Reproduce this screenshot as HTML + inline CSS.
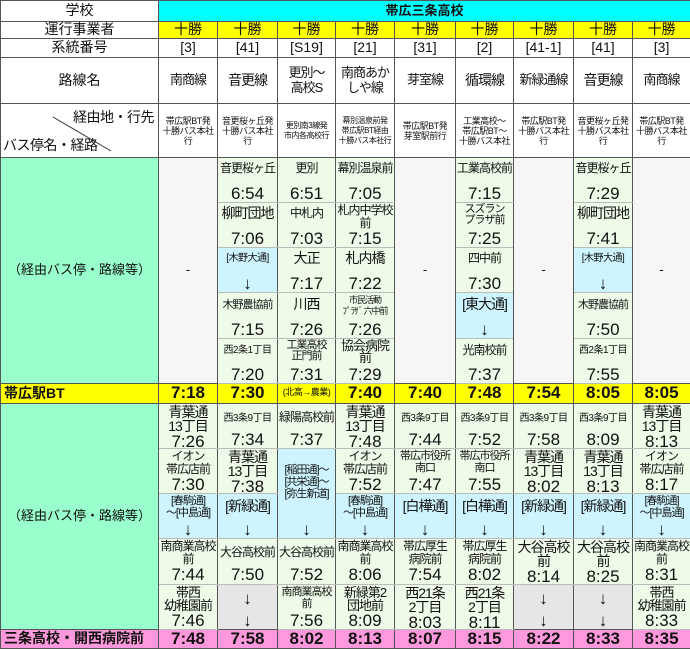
<!DOCTYPE html>
<html><head><meta charset="utf-8">
<style>
body{margin:0;background:#fff;font-family:"Liberation Sans","Noto Sans CJK JP",sans-serif;}
table{border-collapse:collapse;table-layout:fixed;width:690px;}
td{border:1px solid #555;padding:0;text-align:center;vertical-align:middle;font-size:13px;line-height:1.1;overflow:hidden;color:#111;white-space:nowrap;}
.hd{background:#00ffff;font-weight:bold;}
.y{background:#ffff00;}
.g{background:#edfbe8;border-color:#777 #555 #bbb #555;}
.b{background:#cdf4ff;border-color:#777 #555 #bbb #555;}
.gr{background:#e6e6e6;}
.w{background:#f6f6f6;}
.lg{background:#99ffcc;}
.pk{background:#ff99dd;}
.c{height:44px;display:flex;flex-direction:column;justify-content:space-between;align-items:center;padding:1px 0 0;box-sizing:border-box;overflow:hidden;}
.c span:first-child{letter-spacing:-1px;white-space:nowrap;font-size:12px;line-height:13px;}
.c span.t{font-size:17px;line-height:17px;letter-spacing:0;}
.c span.s{font-size:10px;letter-spacing:-0.5px;}
.c span.m{font-size:14px;line-height:14px;letter-spacing:-1px;}
.r{font-size:17px;font-weight:bold;}
.sm{font-size:9px;letter-spacing:-0.5px;line-height:10px;}
.rn{font-size:14px;}
</style></head><body>
<table>
<colgroup><col style="width:158px"><col style="width:59px"><col style="width:60px"><col style="width:58px"><col style="width:59px"><col style="width:61px"><col style="width:58px"><col style="width:60px"><col style="width:59px"><col style="width:58px"></colgroup>
<tr style="height:21px"><td style="font-size:14px">学校</td><td colspan="9" class="hd">帯広三条高校</td></tr>
<tr style="height:17px"><td style="font-size:14px">運行事業者</td><td class="y rn">十勝</td><td class="y rn">十勝</td><td class="y rn">十勝</td><td class="y rn">十勝</td><td class="y rn">十勝</td><td class="y rn">十勝</td><td class="y rn">十勝</td><td class="y rn">十勝</td><td class="y rn">十勝</td></tr>
<tr style="height:19px"><td style="font-size:14px">系統番号</td><td class="rn">[3]</td><td class="rn">[41]</td><td class="rn">[S19]</td><td class="rn">[21]</td><td class="rn">[31]</td><td class="rn">[2]</td><td class="rn">[41-1]</td><td class="rn">[41]</td><td class="rn">[3]</td></tr>
<tr style="height:46px"><td style="font-size:14px">路線名</td><td style="letter-spacing:-1px">南商線</td><td class="rn" style="letter-spacing:-1px">音更線</td><td style="letter-spacing:-1px">更別～<br>高校S</td><td style="letter-spacing:-1px">南商あか<br>しや線</td><td style="letter-spacing:-1px">芽室線</td><td class="rn" style="letter-spacing:-1px">循環線</td><td style="letter-spacing:-1px">新緑通線</td><td class="rn" style="letter-spacing:-1px">音更線</td><td style="letter-spacing:-1px">南商線</td></tr>
<tr style="height:54px"><td style="position:relative;height:53px;text-align:left">
<svg width="158" height="54" style="position:absolute;left:0;top:0"><line x1="52" y1="13" x2="110" y2="47" stroke="#333" stroke-width="1"/></svg>
<span style="position:absolute;right:4px;top:6px;font-size:14px;letter-spacing:-0.5px">経由地・行先</span>
<span style="position:absolute;left:2px;bottom:4px;font-size:14px;letter-spacing:-0.5px">バス停名・経路</span></td>
<td class="sm">帯広駅BT発<br>十勝バス本社<br>行</td><td class="sm">音更桜ヶ丘発<br>十勝バス本社<br>行</td><td class="sm" style="font-size:8px">更別南3線発<br>市内各高校行</td><td class="sm" style="font-size:8px">幕別温泉前発<br>帯広駅BT経由<br>十勝バス本社行</td><td class="sm">帯広駅BT発<br>芽室駅前行</td><td class="sm">工業高校～<br>帯広駅BT～<br>十勝バス本社</td><td class="sm">帯広駅BT発<br>十勝バス本社<br>行</td><td class="sm">音更桜ヶ丘発<br>十勝バス本社<br>行</td><td class="sm">帯広駅BT発<br>十勝バス本社<br>行</td></tr>

<tr style="height:45px"><td rowspan="5" class="lg" style="font-size:13px">（経由バス停・路線等）</td>
<td rowspan="5" class="w">-</td>
<td class="g"><div class="c"><span style="margin-top:3px">音更桜ヶ丘</span><span class="t">6:54</span></div></td>
<td class="g"><div class="c"><span style="margin-top:3px">更別</span><span class="t">6:51</span></div></td>
<td class="g"><div class="c"><span style="margin-top:3px">幕別温泉前</span><span class="t">7:05</span></div></td>
<td rowspan="5" class="w">-</td>
<td class="g"><div class="c"><span style="margin-top:3px">工業高校前</span><span class="t">7:15</span></div></td>
<td rowspan="5" class="w">-</td>
<td class="g"><div class="c"><span style="margin-top:3px">音更桜ヶ丘</span><span class="t">7:29</span></div></td>
<td rowspan="5" class="w">-</td></tr>
<tr style="height:45px">
<td class="g"><div class="c"><span style="font-size:14px;margin-top:3px">柳町団地</span><span class="t">7:06</span></div></td>
<td class="g"><div class="c"><span style="margin-top:3px">中札内</span><span class="t">7:03</span></div></td>
<td class="g"><div class="c"><span>札内中学校<br>前</span><span class="t">7:15</span></div></td>
<td class="g"><div class="c"><span style="font-size:11px;line-height:11px">スズラン<br>プラザ前</span><span class="t">7:25</span></div></td>
<td class="g"><div class="c"><span style="font-size:14px;margin-top:3px">柳町団地</span><span class="t">7:41</span></div></td></tr>
<tr style="height:45px">
<td class="b"><div class="c"><span class="s" style="margin-top:3px">[木野大通]</span><span class="t">↓</span></div></td>
<td class="g"><div class="c"><span style="font-size:14px;margin-top:3px">大正</span><span class="t">7:17</span></div></td>
<td class="g"><div class="c"><span style="font-size:14px;margin-top:3px">札内橋</span><span class="t">7:22</span></div></td>
<td class="g"><div class="c"><span style="margin-top:3px">四中前</span><span class="t">7:30</span></div></td>
<td class="b"><div class="c"><span class="s" style="margin-top:3px">[木野大通]</span><span class="t">↓</span></div></td></tr>
<tr style="height:46px">
<td class="g"><div class="c"><span style="font-size:11px;margin-top:4px">木野農協前</span><span class="t">7:15</span></div></td>
<td class="g"><div class="c"><span style="font-size:14px;margin-top:3px">川西</span><span class="t">7:26</span></div></td>
<td class="g"><div class="c"><span style="font-size:9px;line-height:11px">市民活動<br>ﾌﾟﾗｻﾞ 六中前</span><span class="t">7:26</span></div></td>
<td class="b"><div class="c"><span style="font-size:14px;margin-top:3px">[東大通]</span><span class="t">↓</span></div></td>
<td class="g"><div class="c"><span style="font-size:11px;margin-top:4px">木野農協前</span><span class="t">7:50</span></div></td></tr>
<tr style="height:45px">
<td class="g"><div class="c"><span class="s" style="margin-top:4px">西2条1丁目</span><span class="t">7:20</span></div></td>
<td class="g"><div class="c"><span style="font-size:11px;line-height:11px">工業高校<br>正門前</span><span class="t">7:31</span></div></td>
<td class="g"><div class="c"><span style="font-size:13px;line-height:12px">協会病院<br>前</span><span class="t">7:29</span></div></td>
<td class="g"><div class="c"><span style="margin-top:4px">光南校前</span><span class="t">7:37</span></div></td>
<td class="g"><div class="c"><span class="s" style="margin-top:4px">西2条1丁目</span><span class="t">7:55</span></div></td></tr>

<tr style="height:19px"><td class="y" style="text-align:left;font-weight:bold;font-size:14px;padding-left:3px">帯広駅BT</td><td class="y r">7:18</td><td class="y r">7:30</td><td class="y" style="font-size:9px;letter-spacing:-0.5px">(北高→農業)</td><td class="y r">7:40</td><td class="y r">7:40</td><td class="y r">7:48</td><td class="y r">7:54</td><td class="y r">8:05</td><td class="y r">8:05</td></tr>

<tr style="height:45px"><td rowspan="5" class="lg">（経由バス停・路線等）</td>
<td class="g"><div class="c"><span class="m">青葉通<br>13丁目</span><span class="t">7:26</span></div></td>
<td class="g"><div class="c"><span class="s" style="margin-top:7px">西3条9丁目</span><span class="t">7:34</span></div></td>
<td class="g"><div class="c"><span style="margin-top:6px">緑陽高校前</span><span class="t">7:37</span></div></td>
<td class="g"><div class="c"><span class="m">青葉通<br>13丁目</span><span class="t">7:48</span></div></td>
<td class="g"><div class="c"><span class="s" style="margin-top:7px">西3条9丁目</span><span class="t">7:44</span></div></td>
<td class="g"><div class="c"><span class="s" style="margin-top:7px">西3条9丁目</span><span class="t">7:52</span></div></td>
<td class="g"><div class="c"><span class="s" style="margin-top:7px">西3条9丁目</span><span class="t">7:58</span></div></td>
<td class="g"><div class="c"><span class="s" style="margin-top:7px">西3条9丁目</span><span class="t">8:09</span></div></td>
<td class="g"><div class="c"><span class="m">青葉通<br>13丁目</span><span class="t">8:13</span></div></td></tr>
<tr style="height:45px">
<td class="g"><div class="c"><span>イオン<br>帯広店前</span><span class="t">7:30</span></div></td>
<td class="g"><div class="c"><span class="m">青葉通<br>13丁目</span><span class="t">7:38</span></div></td>
<td rowspan="2" class="b"><div class="c" style="height:89px"><span style="font-size:11px;line-height:12px;margin-top:14px">[稲田通]～<br>[共栄通]～<br>[弥生新道]</span><span class="t">↓</span></div></td>
<td class="g"><div class="c"><span>イオン<br>帯広店前</span><span class="t">7:52</span></div></td>
<td class="g"><div class="c"><span style="font-size:11px;line-height:12px">帯広市役所<br>南口</span><span class="t">7:47</span></div></td>
<td class="g"><div class="c"><span style="font-size:11px;line-height:12px">帯広市役所<br>南口</span><span class="t">7:55</span></div></td>
<td class="g"><div class="c"><span class="m">青葉通<br>13丁目</span><span class="t">8:02</span></div></td>
<td class="g"><div class="c"><span class="m">青葉通<br>13丁目</span><span class="t">8:13</span></div></td>
<td class="g"><div class="c"><span>イオン<br>帯広店前</span><span class="t">8:17</span></div></td></tr>
<tr style="height:45px">
<td class="b"><div class="c"><span style="font-size:11px;line-height:12px">[春駒通]<br>～[中島通]</span><span class="t">↓</span></div></td>
<td class="b"><div class="c"><span style="font-size:14px;margin-top:5px">[新緑通]</span><span class="t">↓</span></div></td>
<td class="b"><div class="c"><span style="font-size:11px;line-height:12px">[春駒通]<br>～[中島通]</span><span class="t">↓</span></div></td>
<td class="b"><div class="c"><span style="font-size:14px;margin-top:5px">[白樺通]</span><span class="t">↓</span></div></td>
<td class="b"><div class="c"><span style="font-size:14px;margin-top:5px">[白樺通]</span><span class="t">↓</span></div></td>
<td class="b"><div class="c"><span style="font-size:14px;margin-top:5px">[新緑通]</span><span class="t">↓</span></div></td>
<td class="b"><div class="c"><span style="font-size:14px;margin-top:5px">[新緑通]</span><span class="t">↓</span></div></td>
<td class="b"><div class="c"><span style="font-size:11px;line-height:12px">[春駒通]<br>～[中島通]</span><span class="t">↓</span></div></td></tr>
<tr style="height:46px">
<td class="g"><div class="c"><span>南商業高校<br>前</span><span class="t">7:44</span></div></td>
<td class="g"><div class="c"><span style="margin-top:6px">大谷高校前</span><span class="t">7:50</span></div></td>
<td class="g"><div class="c"><span style="margin-top:6px">大谷高校前</span><span class="t">7:52</span></div></td>
<td class="g"><div class="c"><span>南商業高校<br>前</span><span class="t">8:06</span></div></td>
<td class="g"><div class="c"><span>帯広厚生<br>病院前</span><span class="t">7:54</span></div></td>
<td class="g"><div class="c"><span>帯広厚生<br>病院前</span><span class="t">8:02</span></div></td>
<td class="g"><div class="c"><span class="m">大谷高校<br>前</span><span class="t">8:14</span></div></td>
<td class="g"><div class="c"><span class="m">大谷高校<br>前</span><span class="t">8:25</span></div></td>
<td class="g"><div class="c"><span>南商業高校<br>前</span><span class="t">8:31</span></div></td></tr>
<tr style="height:45px">
<td class="g"><div class="c"><span style="font-size:13px">帯西<br>幼稚園前</span><span class="t">7:46</span></div></td>
<td class="gr"><div class="c"><span class="t" style="margin-top:4px">↓</span><span class="t">↓</span></div></td>
<td class="g"><div class="c"><span style="font-size:11px;line-height:12px">南商業高校<br>前</span><span class="t">7:56</span></div></td>
<td class="g"><div class="c"><span style="font-size:13px">新緑第2<br>団地前</span><span class="t">8:09</span></div></td>
<td class="g"><div class="c"><span class="m">西21条<br>2丁目</span><span class="t">8:03</span></div></td>
<td class="g"><div class="c"><span class="m">西21条<br>2丁目</span><span class="t">8:11</span></div></td>
<td class="gr"><div class="c"><span class="t" style="margin-top:4px">↓</span><span class="t">↓</span></div></td>
<td class="gr"><div class="c"><span class="t" style="margin-top:4px">↓</span><span class="t">↓</span></div></td>
<td class="g"><div class="c"><span style="font-size:13px">帯西<br>幼稚園前</span><span class="t">8:33</span></div></td></tr>

<tr style="height:19px"><td class="pk" style="text-align:left;font-size:14px;font-weight:bold;padding-left:3px">三条高校・開西病院前</td><td class="pk r">7:48</td><td class="pk r">7:58</td><td class="pk r">8:02</td><td class="pk r">8:13</td><td class="pk r">8:07</td><td class="pk r">8:15</td><td class="pk r">8:22</td><td class="pk r">8:33</td><td class="pk r">8:35</td></tr>
</table>
</body></html>
